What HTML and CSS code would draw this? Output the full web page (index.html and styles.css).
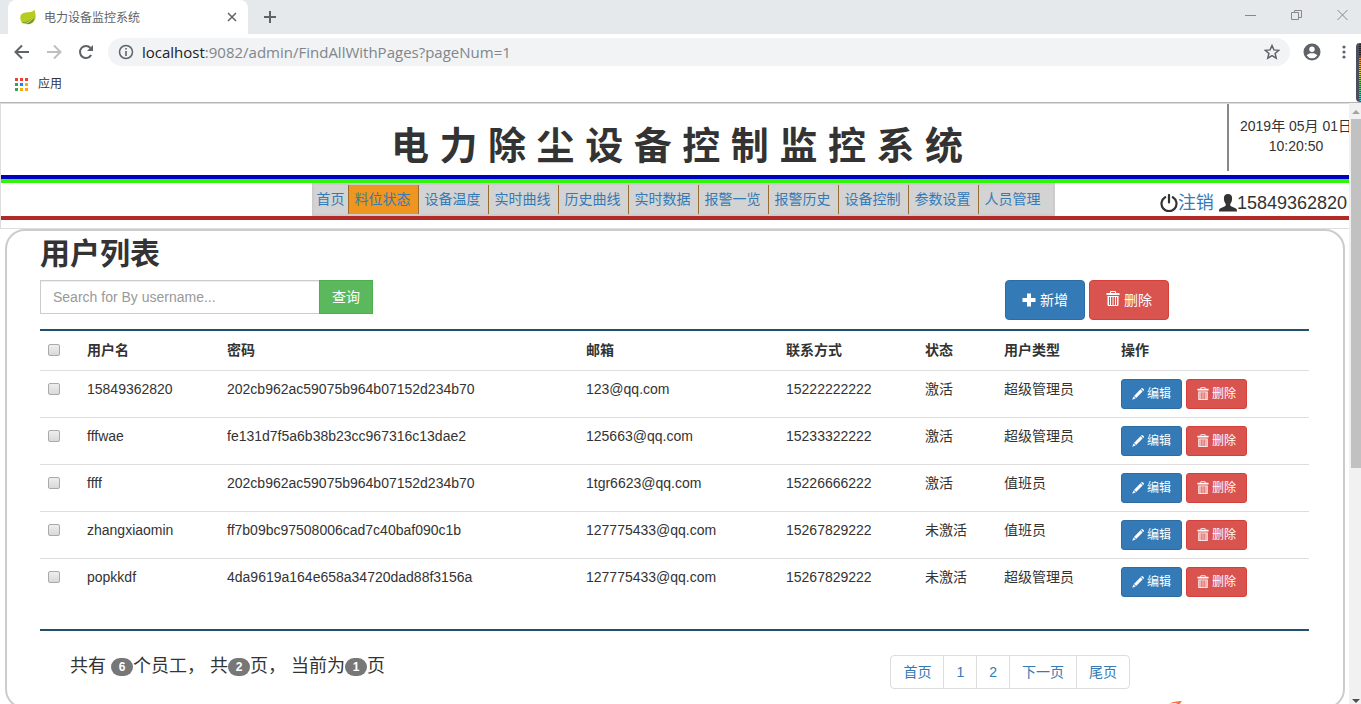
FILE: index.html
```html
<!DOCTYPE html>
<html lang="zh-CN">
<head>
<meta charset="utf-8">
<title>电力设备监控系统</title>
<link rel="stylesheet" href="styles.css">
</head>
<body>
<svg class="sprite" aria-hidden="true">
  <symbol id="i-plus" viewBox="0 0 14 14"><path d="M5 .5h4V5h4.500v4H9v4.500H5V9H.5V5H5z"/></symbol>
  <symbol id="i-trash" viewBox="0 0 14 16"><path d="M4 2V1q0-1 1-1h4q1 0 1 1v1h3.500v2H.5V2zM5 1v1h4V1zM1.500 5h11v9q0 1-1 1h-9q-1 0-1-1zM3 6v8h1V6zm2 0v8h1.500V6zm2.500 0v8H9V6zM10 6v8h1V6z" fill-rule="evenodd"/></symbol>
  <symbol id="i-pencil" viewBox="0 0 14 14"><path d="M10.500 1l.7-.7q.6-.6 1.200 0l1.300 1.300q.6.600 0 1.200l-.8.800zM9.900 1.600l2.500 2.500-7.600 7.600-2.500-2.500zM1.800 9.800l2.500 2.500L.2 13.800z"/></symbol>
  <symbol id="i-user" viewBox="0 0 18 18"><path d="M9 0c2.800 0 4.300 2 4.100 4.800C13 7.500 12 9 11.300 10c-.3 1.300.1 2 1.200 2.500l4 1.800c1.200.6 1.500 1.300 1.500 3.200H0c0-1.900.3-2.600 1.500-3.200l4-1.800C6.600 12 7 11.300 6.700 10 6 9 5 7.500 4.900 4.800 4.700 2 6.200 0 9 0z"/></symbol>
  <symbol id="i-off" viewBox="0 0 18 18"><path d="M5.200 3.200a7.500 7.500 0 1 0 7.600 0" fill="none" stroke="currentColor" stroke-width="2.200" stroke-linecap="round"/><path d="M9 1v7.500" fill="none" stroke="currentColor" stroke-width="2.200" stroke-linecap="round"/></symbol>
</svg>

<div class="tabstrip">
  <div class="tab">
    <svg class="leaf" viewBox="0 0 16 16"><path d="M14.500.8C15.800 5 16.500 9.500 13.800 12.500 10.500 16 5 15.200 1.800 13.500-.5 9.500-.3 6 3 4.300 6.500 2.600 12 4.200 14.500.8z" fill="#b7cc1f"/><path d="M1.800 13.500c5-.2 9.500-2 12.200-6.500.7 3-.2 5.500-2.400 7-3 2-7 1.200-9.800-.5z" fill="#6a9c25"/><path d="M1.200 14.800c5 0 9.500-1.800 12.500-6.800" stroke="#e8eda8" stroke-width=".8" fill="none"/></svg>
    <span class="tab-title">电力设备监控系统</span>
    <button class="chrome-btn" aria-label="关闭标签页"><svg width="10" height="10" viewBox="0 0 10 10"><path d="M1 1l8 8M9 1L1 9" class="line slim"/></svg></button>
  </div>
  <button class="chrome-btn newtab" aria-label="新标签页"><svg width="12" height="12" viewBox="0 0 12 12"><path d="M6 0v12M0 6h12" class="line"/></svg></button>
  <div class="window-buttons">
    <button class="chrome-btn" aria-label="最小化"><svg width="11" height="12" viewBox="0 0 11 12"><path d="M0 6.500h11" class="thin"/></svg></button>
    <button class="chrome-btn" aria-label="还原"><svg width="11" height="12" viewBox="0 0 11 12"><path d="M.5 3.500h7v7h-7zM3.500 3.500v-2h7v7h-3" class="thin"/></svg></button>
    <button class="chrome-btn" aria-label="关闭"><svg width="11" height="12" viewBox="0 0 11 12"><path d="M.5 1l10 10M10.500 1l-10 10" class="thin"/></svg></button>
  </div>
</div>

<div class="toolbar">
  <button class="chrome-btn" aria-label="后退"><svg width="16" height="16" viewBox="0 0 16 16"><path d="M15 8H2M8 1.500L1.500 8 8 14.500" class="line"/></svg></button>
  <button class="chrome-btn dim" aria-label="前进"><svg width="16" height="16" viewBox="0 0 16 16"><path d="M1 8h13M8 1.500L14.500 8 8 14.500" class="line"/></svg></button>
  <button class="chrome-btn" aria-label="重新加载"><svg width="16" height="16" viewBox="0 0 16 16"><path d="M13.200 11A6 6 0 1 1 12.500 4" class="line"/><path d="M15 1v6H9z" fill="currentColor"/></svg></button>
  <div class="omnibox">
    <svg width="16" height="16" viewBox="0 0 16 16"><circle cx="8" cy="8" r="6.500" class="ring"/><path d="M7.200 7h1.600v5H7.200zM7.200 4h1.600v1.600H7.200z" fill="#5f6368"/></svg>
    <span class="url"><b>localhost</b>:9082/admin/FindAllWithPages?pageNum=1</span>
    <svg width="16" height="16" viewBox="0 0 16 16"><path d="M8 1.500l1.900 4.400 4.800.4-3.600 3.200 1.100 4.700L8 11.700l-4.200 2.500 1.100-4.700L1.300 6.300l4.800-.4z" class="ring"/></svg>
  </div>
  <svg width="18" height="18" viewBox="0 0 18 18"><circle cx="9" cy="9" r="8.500" fill="#5f6368"/><circle cx="9" cy="6.200" r="2.700" fill="#fff"/><path d="M3.700 12.600c1-2 3-2.400 5.300-2.400s4.300.4 5.300 2.400A6.500 6.500 0 0 1 9 15.300a6.500 6.500 0 0 1-5.300-2.700z" fill="#fff"/></svg>
  <button class="chrome-btn menu" aria-label="菜单"><svg width="4" height="14" viewBox="0 0 4 14"><circle cx="2" cy="2" r="1.600"/><circle cx="2" cy="7" r="1.600"/><circle cx="2" cy="12" r="1.600"/></svg></button>
</div>

<div class="bookmarks">
  <svg width="13" height="13" viewBox="0 0 13 13" shape-rendering="crispEdges"><path d="M0 0h3v3H0zM5 0h3v3H5zM10 0h3v3h-3z" fill="#ea4335"/><path d="M0 5h3v3H0zM0 10h3v3H0z" fill="#34a853"/><path d="M5 5h3v3H5z" fill="#1a82f7"/><path d="M10 5h3v3h-3zM5 10h3v3H5zM10 10h3v3h-3z" fill="#fbab05"/></svg>
  <span>应用</span>
</div>
<div class="meter"></div>

<div class="viewport">
<div class="page">
  <header class="banner">
    <div class="masthead">
      <h1>电 力 除 尘 设 备 控 制 监 控 系 统</h1>
      <div class="clock">2019年 05月 01日<br>10:20:50</div>
    </div>
    <div class="navrow">
      <nav>
        <a href="#">首页</a><a href="#" class="active">料位状态</a><a href="#">设备温度</a><a href="#">实时曲线</a><a href="#">历史曲线</a><a href="#">实时数据</a><a href="#">报警一览</a><a href="#">报警历史</a><a href="#">设备控制</a><a href="#">参数设置</a><a href="#">人员管理</a>
      </nav>
      <div class="account">
        <svg><use href="#i-off"/></svg><a href="#">注销</a>
        <svg class="person"><use href="#i-user"/></svg><span>15849362820</span>
      </div>
    </div>
  </header>

  <main class="panel">
    <h2>用户列表</h2>
    <div class="actions">
      <form class="search">
        <input type="text" placeholder="Search for By username..." aria-label="Search for By username">
        <button type="button" class="btn green">查询</button>
      </form>
      <div class="pair">
        <button class="btn large blue"><svg><use href="#i-plus"/></svg>新增</button>
        <button class="btn large red"><svg><use href="#i-trash"/></svg>删除</button>
      </div>
    </div>
    <div class="list">
    <table>
      <colgroup><col class="c-check"><col class="c-name"><col class="c-pass"><col class="c-mail"><col class="c-phone"><col class="c-state"><col class="c-type"><col></colgroup>
      <thead>
        <tr><th><input type="checkbox" aria-label="全选"></th><th>用户名</th><th>密码</th><th>邮箱</th><th>联系方式</th><th>状态</th><th>用户类型</th><th>操作</th></tr>
      </thead>
      <tbody>
        <tr><td><input type="checkbox" aria-label="选择 15849362820"></td><td>15849362820</td><td>202cb962ac59075b964b07152d234b70</td><td>123@qq.com</td><td>15222222222</td><td>激活</td><td>超级管理员</td><td><div class="pair"><button class="btn small blue"><svg><use href="#i-pencil"/></svg>编辑</button><button class="btn small red"><svg><use href="#i-trash"/></svg>删除</button></div></td></tr>
        <tr><td><input type="checkbox" aria-label="选择 fffwae"></td><td>fffwae</td><td>fe131d7f5a6b38b23cc967316c13dae2</td><td>125663@qq.com</td><td>15233322222</td><td>激活</td><td>超级管理员</td><td><div class="pair"><button class="btn small blue"><svg><use href="#i-pencil"/></svg>编辑</button><button class="btn small red"><svg><use href="#i-trash"/></svg>删除</button></div></td></tr>
        <tr><td><input type="checkbox" aria-label="选择 ffff"></td><td>ffff</td><td>202cb962ac59075b964b07152d234b70</td><td>1tgr6623@qq.com</td><td>15226666222</td><td>激活</td><td>值班员</td><td><div class="pair"><button class="btn small blue"><svg><use href="#i-pencil"/></svg>编辑</button><button class="btn small red"><svg><use href="#i-trash"/></svg>删除</button></div></td></tr>
        <tr><td><input type="checkbox" aria-label="选择 zhangxiaomin"></td><td>zhangxiaomin</td><td>ff7b09bc97508006cad7c40baf090c1b</td><td>127775433@qq.com</td><td>15267829222</td><td>未激活</td><td>值班员</td><td><div class="pair"><button class="btn small blue"><svg><use href="#i-pencil"/></svg>编辑</button><button class="btn small red"><svg><use href="#i-trash"/></svg>删除</button></div></td></tr>
        <tr><td><input type="checkbox" aria-label="选择 popkkdf"></td><td>popkkdf</td><td>4da9619a164e658a34720dad88f3156a</td><td>127775433@qq.com</td><td>15267829222</td><td>未激活</td><td>超级管理员</td><td><div class="pair"><button class="btn small blue"><svg><use href="#i-pencil"/></svg>编辑</button><button class="btn small red"><svg><use href="#i-trash"/></svg>删除</button></div></td></tr>
      </tbody>
    </table>
    </div>
    <div class="footer">
      <p>共有 <span class="badge">6</span>个员工，&nbsp;共<span class="badge">2</span>页，&nbsp;当前为<span class="badge">1</span>页</p>
      <div class="pager"><a href="#">首页</a><a href="#">1</a><a href="#">2</a><a href="#">下一页</a><a href="#">尾页</a></div>
    </div>
    <svg class="float-mark" width="14" height="4" viewBox="0 0 14 4"><path d="M0 2.500Q5 0 13 0L10 4 7 2z" fill="#f4744e"/></svg>
  </main>
</div>
<div class="scrollbar">
  <svg width="8" height="16" viewBox="0 0 8 16"><path d="M0 11l4-4 4 4z" fill="#a3a3a3"/></svg>
  <div class="thumb"></div>
  <svg class="down" width="8" height="6" viewBox="0 0 8 6"><path d="M0 1h8L4 5z" fill="#505050"/></svg>
</div>
</div>
</body>
</html>
```

FILE: styles.css
```css
* { box-sizing: border-box; }

body {
  margin: 0;
  height: 100vh;
  display: flex;
  flex-direction: column;
  overflow: hidden;
  position: relative;
  background: #fff;
  color: #333;
  font: 14px/20px "Liberation Sans", "Noto Sans CJK SC", sans-serif;
}

a { color: #337ab7; text-decoration: none; }
button, input { font: inherit; }
.sprite { position: absolute; width: 0; height: 0; }

/* browser chrome */
.chrome-btn {
  display: inline-flex;
  padding: 0;
  border: 0;
  background: none;
  color: #5f6368;
}
.line { fill: none; stroke: currentColor; stroke-width: 2; }
.slim { stroke-width: 1.5; }
.thin { fill: none; stroke: #888; stroke-width: 1; }
.ring { fill: none; stroke: #5f6368; stroke-width: 1.5; }
.dim { color: #bdbfc1; }

.tabstrip {
  flex: none;
  display: flex;
  align-items: center;
  height: 34px;
  padding-left: 8px;
  background: #e6e9ec;
}
.tab {
  display: flex;
  align-items: center;
  gap: 8px;
  width: 240px;
  height: 34px;
  padding: 0 11px 0 12px;
  border-radius: 8px 8px 0 0;
  background: #fff;
}
.leaf { width: 16px; height: 16px; }
.tab-title { flex: 1; padding-top: 2px; font-size: 12px; color: #5f6368; }
.newtab { margin-left: 16px; }
.window-buttons { display: flex; gap: 35px; margin: 0 13px 5px auto; }

.toolbar {
  flex: none;
  display: flex;
  align-items: center;
  gap: 16px;
  height: 36px;
  padding: 0 15px 0 14px;
}
.omnibox {
  flex: 1;
  display: flex;
  align-items: center;
  gap: 8px;
  height: 28px;
  margin: 0 -3px 0 -2px;
  padding: 0 10px;
  border-radius: 14px;
  background: #f1f3f4;
}
.url { flex: 1; color: #80868b; font: 15px/20px "Open Sans", "Noto Sans", sans-serif; }
.url b { color: #202124; font-weight: 400; }
.menu { margin-left: 5px; }
.menu svg { fill: #5f6368; }

.bookmarks {
  flex: none;
  display: flex;
  align-items: center;
  gap: 10px;
  height: 33px;
  padding: 0 15px 4px;
  border-bottom: 1px solid #b5b5b5;
  font-size: 12px;
}
.meter {
  position: absolute;
  top: 43px;
  right: 0;
  width: 5px;
  height: 59px;
  border: 1px solid #4b4f5c;
  border-left-width: 3px;
  border-right: 0;
  border-radius: 4px 0 0 4px;
  background: repeating-linear-gradient(transparent 0 1px, #4a4e5a 1px 2px), linear-gradient(#222 20%, #e8842a 25%, #e8d43a 50%, #5cc452 70%, #3cd0dd);
}

/* page area */
.viewport { flex: 1; min-height: 0; display: flex; overflow: hidden; }
.page { flex: 1; min-width: 0; overflow: hidden; }
.scrollbar {
  flex: none;
  display: flex;
  flex-direction: column;
  align-items: center;
  width: 12px;
  padding-left: 2px;
  background: #f1f1f1;
}
.thumb { align-self: stretch; height: 58%; background: #c1c1c1; }
.down { margin-top: auto; }

.banner {
  padding-bottom: 8px;
  border: 1px solid #ddd;
  border-right: 0;
}
.masthead, .navrow {
  display: grid;
  grid-template-columns: 1fr auto 1fr;
}
.masthead { padding: 0 0 4px 4px; }
.masthead h1 {
  grid-column: 2;
  margin: 20px 0 0;
  font-size: 38px;
  line-height: 44px;
}
.clock {
  justify-self: end;
  width: 122px;
  height: 67px;
  padding: 12px 0 0 11px;
  border-left: 2px solid #888;
  white-space: nowrap;
  text-align: center;
  display: flex;
}
.navrow {
  padding-left: 16px;
  border-top: 4px solid #0000bf;
  border-bottom: 4px solid #b12a27;
  box-shadow: inset 0 4px #33f50b;
  padding-top: 4px;
}
nav {
  grid-column: 2;
  display: flex;
  padding-right: 5px;
  border: 2px solid #ccc;
  background: #d3d3d3;
}
nav a {
  padding: 4px 7px 5px 6px;
  border-left: 1px solid #996b2e;
}
nav a:first-child { padding: 4px 3px 5px; border-left: 0; }
nav .active { background: #ee9620; }
.account {
  display: flex;
  justify-content: flex-end;
  align-items: center;
  padding: 6px 2px 0 0;
  font-size: 18px;
}
.account svg { width: 18px; height: 18px; fill: currentColor; }
.account .person { margin-left: 5px; }

.panel {
  position: relative;
  margin: 0 4px 0 5px;
  padding: 6px 34px 18px 33px;
  border: 2px solid #ccc;
  border-radius: 20px;
}
.panel h2 { margin: 0 0 10px; font-size: 30px; line-height: 33px; }
.actions {
  display: flex;
  justify-content: space-between;
  align-items: flex-start;
  padding-right: 140px;
  margin-bottom: 9px;
}
.search { display: flex; }
.search input {
  width: 280px;
  height: 34px;
  padding: 6px 12px;
  border: 1px solid #ccc;
  box-shadow: inset 0 1px 1px rgba(0, 0, 0, .075);
}
.search input::placeholder { color: #999; opacity: 1; }
.pair { display: flex; gap: 4px; }

.btn {
  display: inline-flex;
  align-items: center;
  justify-content: center;
  border: 1px solid;
  color: #fff;
}
.btn svg { fill: #fff; }
.green { width: 54px; height: 34px; margin-left: -1px; padding: 0; background: #5cb85c; border-color: #4cae4c; }
.blue { background: #337ab7; border-color: #2e6da4; }
.red { background: #d9534f; border-color: #d43f3a; }
.large { width: 80px; height: 40px; gap: 4px; padding: 0; border-radius: 4px; }
.large svg { width: 14px; height: 14px; }
.large.red svg { height: 16px; margin-bottom: 2px; }
.small { width: 61px; height: 30px; gap: 3px; padding: 0; border-radius: 3px; font-size: 12px; }
.small svg { width: 12px; height: 12px; }
.small.red svg { height: 14px; margin-bottom: 1px; }

.list {
  padding-bottom: 24px;
  border-top: 2px solid #23516b;
  border-bottom: 2px solid #23516b;
}
table { width: 100%; border-collapse: collapse; table-layout: fixed; }
.c-check { width: 39px; }
.c-name { width: 140px; }
.c-pass { width: 359px; }
.c-mail { width: 200px; }
.c-phone { width: 139px; }
.c-state { width: 79px; }
.c-type { width: 117px; }
th, td { padding: 8px; text-align: left; vertical-align: top; }
th { padding: 9px 8px 10px; }
td { border-top: 1px solid #ddd; }
input[type="checkbox"] {
  appearance: none;
  display: block;
  width: 12px;
  height: 12px;
  margin: 4px 0 0;
  border: 1px solid #aaa;
  border-radius: 2px;
  background: linear-gradient(#eee, #d9d9d9);
}

.footer {
  display: flex;
  justify-content: space-between;
  align-items: flex-start;
  margin-top: 24px;
  padding: 0 179px 0 30px;
}
.footer p { margin: 0; font-size: 18px; line-height: 22px; }
.badge {
  display: inline-block;
  min-width: 22px;
  padding: 3px 7px;
  border-radius: 10px;
  background: #777;
  color: #fff;
  font-size: 12px;
  font-weight: 700;
  line-height: 12px;
  text-align: center;
  vertical-align: middle;
}
.pager { display: flex; border: 1px solid #ddd; border-radius: 4px; }
.pager a { padding: 6px 12px; border-left: 1px solid #ddd; }
.pager a:first-child { border-left: 0; }
.float-mark { position: absolute; right: 160px; bottom: 2px; }
```
